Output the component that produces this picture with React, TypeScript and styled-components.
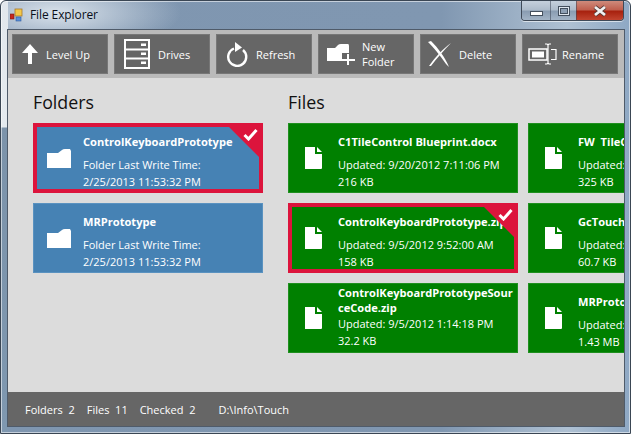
import React from "react";
import styled, { createGlobalStyle } from "styled-components";

const Global = createGlobalStyle`
  html, body { margin: 0; padding: 0; width: 631px; height: 434px; overflow: hidden; background: #fff; }
  * { box-sizing: border-box; }
  body { font-family: "Open Sans", "Noto Sans", sans-serif; }
`;

const Window = styled.div`
  width: 631px;
  height: 434px;
  display: flex;
  flex-direction: column;
  border: 1px solid #3a4654;
  border-radius: 6px 6px 0 0;
  padding: 0 6px 7px 7px;
  background:
    linear-gradient(180deg, #e2e7ec 0, #e4eaef 126px, #7c93aa 127px, #7f98b0 100%) left top / 7px 100% no-repeat,
    radial-gradient(ellipse 125px 40px at 55px 12px, rgba(222, 230, 238, 0.95), rgba(214, 226, 238, 0) 100%),
    linear-gradient(90deg, #7f96b0 0%, #8097b1 70%, #afc1d3 90%, #8ea8c4 100%);
  box-shadow: inset 0 0 0 1px rgba(255, 255, 255, 0.55);
`;

const TitleBar = styled.div`
  height: 29px;
  flex: none;
  display: flex;
  align-items: flex-start;
`;

const AppIcon = styled.svg`
  width: 16px;
  height: 16px;
  margin: 6px 4px 0 2px;
  flex: none;
`;

const TitleText = styled.div`
  font-size: 12px;
  line-height: 16px;
  margin-top: 6px;
  color: #0a0f1a;
  letter-spacing: -0.1px;
`;

const WindowControls = styled.div`
  margin-left: auto;
  margin-top: 0;
  display: flex;
  height: 20px;
  border: 1px solid #3f4a58;
  border-top: 0;
  border-radius: 0 0 4px 4px;
  box-shadow: 0 1px 0 rgba(255, 255, 255, 0.6);
  overflow: hidden;
`;

const WinButton = styled.div<{ $w: number; $close?: boolean }>`
  width: ${(p) => p.$w}px;
  display: flex;
  align-items: center;
  justify-content: center;
  border-left: 1px solid rgba(60, 70, 85, 0.55);
  background: ${(p) =>
    p.$close
      ? "linear-gradient(180deg, #cf8b7c 0%, #c0604f 45%, #a8220f 55%, #c2442f 100%)"
      : "linear-gradient(180deg, #c5d0dc 0%, #aebccb 45%, #8a9db2 55%, #a3b4c6 100%)"};
  &:first-child { border-left: 0; }
`;

const MinGlyph = styled.div`
  width: 13px;
  height: 5px;
  margin-top: 5px;
  background: #fff;
  border: 1px solid #44505e;
`;

const MaxGlyph = styled.div`
  width: 12px;
  height: 10px;
  background: #dfe6ee;
  border: 1px solid #44505e;
  display: flex;
  align-items: center;
  justify-content: center;
  &::after {
    content: "";
    width: 6px;
    height: 4px;
    background: #8fa1b5;
    border: 1px solid #44505e;
  }
`;

const Body = styled.div`
  flex: 1;
  min-height: 0;
  display: flex;
  flex-direction: column;
  box-shadow: 0 0 0 1px #4f5b6a;
  overflow: hidden;
`;

const Toolbar = styled.div`
  height: 48px;
  flex: none;
  display: flex;
  gap: 6px;
  padding: 4px;
  background: #bababa;
`;

const ToolButton = styled.div`
  width: 96px;
  height: 40px;
  flex: none;
  display: flex;
  align-items: center;
  background: #666;
  border: 1px solid #777;
  color: #fff;
  font-size: 11px;
`;

const ToolIconSlot = styled.div<{ $w: number }>`
  width: ${(p) => p.$w}px;
  flex: none;
  display: flex;
  justify-content: center;
  align-items: center;
`;

const ToolLabel = styled.div`
  line-height: 15px;
`;

const Main = styled.div`
  flex: 1;
  min-height: 0;
  display: flex;
  gap: 25px;
  padding: 12px 0 0 25px;
  background: #dcdcdc;
  overflow: hidden;
`;

const Column = styled.div`
  flex: none;
  display: flex;
  flex-direction: column;
`;

const Heading = styled.div`
  font-size: 17.8px;
  line-height: 24px;
  margin-bottom: 9px;
  color: #111;
`;

const TileGrid = styled.div<{ $cols: number }>`
  display: grid;
  grid-template-columns: repeat(${(p) => p.$cols}, 230px);
  grid-auto-rows: 70px;
  gap: 10px;
`;

const Tile = styled.div<{ $color: string; $edge: string; $checked?: boolean }>`
  position: relative;
  display: flex;
  align-items: center;
  background: ${(p) => p.$color};
  border: ${(p) => (p.$checked ? "4px solid #dc143c" : `1px solid ${p.$edge}`)};
  padding-left: ${(p) => (p.$checked ? 9 : 12)}px;
  color: #fff;
  overflow: hidden;
`;

const TileIcon = styled.div`
  width: 25px;
  margin-right: 12px;
  flex: none;
  display: flex;
  justify-content: center;
`;

const TileText = styled.div`
  flex: 1;
  min-width: 0;
  display: flex;
  flex-direction: column;
  font-size: 11px;
  line-height: 17px;
`;

const TileName = styled.div<{ $wrap?: boolean }>`
  font-weight: 700;
  font-size: 11.1px;
  line-height: 15px;
  margin: ${(p) => (p.$wrap ? "-3px 0 0" : "7px 0")};
  ${(p) => (p.$wrap ? "word-break: break-all; padding-right: 1px;" : "white-space: pre;")}
`;

const TileLine = styled.div`
  white-space: nowrap;
`;

const CheckCorner = styled.div`
  position: absolute;
  top: 0;
  right: 0;
  width: 30px;
  height: 30px;
  background: #dc143c;
  clip-path: polygon(0 0, 100% 0, 100% 100%);
`;

const CheckMark = styled.svg`
  position: absolute;
  top: 1px;
  right: 1px;
  width: 15px;
  height: 13px;
`;

const StatusBar = styled.div`
  height: 34px;
  flex: none;
  display: flex;
  align-items: center;
  padding-left: 17px;
  background: #666;
  color: #fff;
  font-size: 11px;
`;

const StatusItem = styled.span<{ $gap: number }>`
  margin-right: ${(p) => p.$gap}px;
  white-space: pre;
`;

const white = { fill: "none", stroke: "#fff" } as const;

const icons = {
  up: (
    <svg width="18" height="22" viewBox="0 0 18 22">
      <path d="M9 1 L17 10 L12 10 L11 10 L11 21 L7 21 L7 10 L1 10 Z" fill="#fff" />
    </svg>
  ),
  drives: (
    <svg width="26" height="30" viewBox="0 0 26 30">
      <rect x="1" y="1" width="24" height="28" {...white} strokeWidth="2" />
      <path d="M1 10.5 H25 M1 19.5 H25" {...white} strokeWidth="2" />
      <path d="M17 4.5 H22 V7 H17 Z M17 13.5 H22 V16 H17 Z M17 22.5 H22 V25 H17 Z" fill="#fff" />
    </svg>
  ),
  refresh: (
    <svg width="22" height="26" viewBox="0 0 22 26">
      <path d="M8 7.5 A9 9 0 1 0 17 9" {...white} strokeWidth="2.4" />
      <path d="M9 1 L16 6.5 L9 11 Z" fill="#fff" />
    </svg>
  ),
  newFolder: (
    <svg width="28" height="22" viewBox="0 0 28 22">
      <path d="M0 5 L8 5 L11 2 Q12 1 14 1 L21 1 Q22 1 22 3 L22 10 L15 10 L15 18 L0 18 Z" fill="#fff" />
      <path d="M21 11 V22 M14 17 H28" {...white} strokeWidth="2" />
    </svg>
  ),
  del: (
    <svg width="24" height="26" viewBox="0 0 24 26">
      <path d="M0 1 C5 6 12 14 18 23 L21 26 C17 16 10 7 3 0 Z" fill="#fff" />
      <path d="M23 2 C15 8 8 15 1 25 L3 25 C9 17 16 9 23 2 Z" fill="#fff" />
    </svg>
  ),
  rename: (
    <svg width="29" height="22" viewBox="0 0 29 22">
      <rect x="1" y="6" width="18" height="11" {...white} strokeWidth="1.5" />
      <rect x="4" y="8.5" width="12" height="6" fill="#fff" />
      <path d="M17 1 H19 L20 2 L21 1 H23 M20 2 V20 M17 21 H19 L20 20 L21 21 H23" {...white} strokeWidth="1.2" />
      <path d="M23 6.5 H28 V16.5 H23" {...white} strokeWidth="1.2" />
    </svg>
  ),
};

const FolderIcon = () => (
  <svg width="24" height="20" viewBox="0 0 24 20">
    <path d="M0 5 L11 5 L15 2 Q16 1 18 1 L23 1 L24 3 L24 20 L0 20 Z" fill="#fff" />
  </svg>
);

const FileIcon = () => (
  <svg width="17" height="22" viewBox="0 0 17 22">
    <path d="M0 0 H10 V7 H17 V21 Q17 22 16 22 H0 Z" fill="#fff" />
    <path d="M12 0 L17 5 H12 Z" fill="#fff" />
  </svg>
);

const tools = [
  { icon: icons.up, w: 33, label: "Level Up" },
  { icon: icons.drives, w: 43, label: "Drives" },
  { icon: icons.refresh, w: 39, label: "Refresh" },
  { icon: icons.newFolder, w: 43, label: <>New<br />Folder</> },
  { icon: icons.del, w: 38, label: "Delete" },
  { icon: icons.rename, w: 39, label: "Rename" },
];

type Item = { name: string; l1: string; l2: string; checked?: boolean; wrap?: boolean };

const folders: Item[] = [
  { name: "ControlKeyboardPrototype", l1: "Folder Last Write Time:", l2: "2/25/2013 11:53:32 PM", checked: true },
  { name: "MRPrototype", l1: "Folder Last Write Time:", l2: "2/25/2013 11:53:32 PM" },
];

const files: Item[] = [
  { name: "C1TileControl Blueprint.docx", l1: "Updated: 9/20/2012 7:11:06 PM", l2: "216 KB" },
  { name: "FW  TileControl.msg", l1: "Updated: 9/20/2012 7:11:06 PM", l2: "325 KB" },
  { name: "ControlKeyboardPrototype.zip", l1: "Updated: 9/5/2012 9:52:00 AM", l2: "158 KB", checked: true },
  { name: "GcTouchInput.zip", l1: "Updated: 9/5/2012 9:52:00 AM", l2: "60.7 KB" },
  { name: "ControlKeyboardPrototypeSourceCode.zip", l1: "Updated: 9/5/2012 1:14:18 PM", l2: "32.2 KB", wrap: true },
  { name: "MRPrototype.zip", l1: "Updated: 9/5/2012 1:14:18 PM", l2: "1.43 MB" },
];

const TileView = ({ item, color, edge, icon }: { item: Item; color: string; edge: string; icon: React.ReactNode }) => (
  <Tile $color={color} $edge={edge} $checked={item.checked}>
    <TileIcon>{icon}</TileIcon>
    <TileText>
      <TileName $wrap={item.wrap}>{item.name}</TileName>
      <TileLine>{item.l1}</TileLine>
      <TileLine>{item.l2}</TileLine>
    </TileText>
    {item.checked && (
      <>
        <CheckCorner />
        <CheckMark viewBox="0 0 15 13">
          <path d="M1.5 7 L5.5 11 L13.5 2" fill="none" stroke="#fff" strokeWidth="3" />
        </CheckMark>
      </>
    )}
  </Tile>
);

export default function App() {
  return (
    <>
      <Global />
      <Window>
        <TitleBar>
          <AppIcon viewBox="0 0 16 16">
            <rect x="0" y="7" width="4" height="5" fill="#c8261c" stroke="#7a1a12" strokeWidth="0.6" />
            <rect x="5" y="2" width="7" height="7" fill="#f3c84a" stroke="#a8782a" strokeWidth="0.8" />
            <rect x="6" y="10" width="5" height="4" fill="#5b8fd8" stroke="#2c5a9e" strokeWidth="0.6" />
          </AppIcon>
          <TitleText>File Explorer</TitleText>
          <WindowControls>
            <WinButton $w={28}><MinGlyph /></WinButton>
            <WinButton $w={26}><MaxGlyph /></WinButton>
            <WinButton $close $w={47}>
              <svg width="16" height="12" viewBox="0 0 16 12">
                <path d="M3 2 L13 10 M13 2 L3 10" stroke="#5a3a36" strokeWidth="4.4" fill="none" />
                <path d="M3 2 L13 10 M13 2 L3 10" stroke="#f2f2f2" strokeWidth="2.8" fill="none" />
              </svg>
            </WinButton>
          </WindowControls>
        </TitleBar>
        <Body>
          <Toolbar>
            {tools.map((t, i) => (
              <ToolButton key={i}>
                <ToolIconSlot $w={t.w}>{t.icon}</ToolIconSlot>
                <ToolLabel>{t.label}</ToolLabel>
              </ToolButton>
            ))}
          </Toolbar>
          <Main>
            <Column>
              <Heading>Folders</Heading>
              <TileGrid $cols={1}>
                {folders.map((f) => (
                  <TileView key={f.name} item={f} color="#4682b4" edge="#5a92c0" icon={<FolderIcon />} />
                ))}
              </TileGrid>
            </Column>
            <Column>
              <Heading>Files</Heading>
              <TileGrid $cols={2}>
                {files.map((f) => (
                  <TileView key={f.name} item={f} color="#008000" edge="#1f8f1f" icon={<FileIcon />} />
                ))}
              </TileGrid>
            </Column>
          </Main>
          <StatusBar>
            <StatusItem $gap={12}>Folders  2</StatusItem>
            <StatusItem $gap={12}>Files  11</StatusItem>
            <StatusItem $gap={23}>Checked  2</StatusItem>
            <StatusItem $gap={0}>D:\Info\Touch</StatusItem>
          </StatusBar>
        </Body>
      </Window>
    </>
  );
}
